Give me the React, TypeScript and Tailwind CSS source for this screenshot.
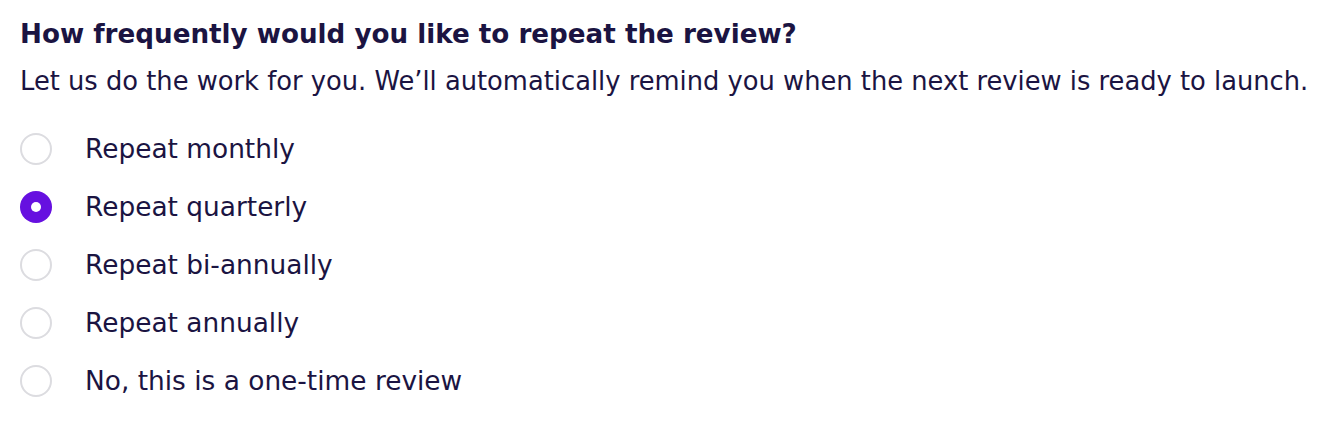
import React, { useState } from 'react'

const options = [
  'Repeat monthly',
  'Repeat quarterly',
  'Repeat bi-annually',
  'Repeat annually',
  'No, this is a one-time review',
]

export default function App() {
  const [selected, setSelected] = useState(1)

  return (
    <div className="min-h-screen bg-white px-5 pt-[16px] text-[#1b1442]" style={{ fontFamily: '"DejaVu Sans", sans-serif' }}>
      <h2 className="text-[26.2px] font-bold leading-[36px]">How frequently would you like to repeat the review?</h2>
      <p className="mt-[12px] text-[25.75px] leading-[34px]">
        Let us do the work for you. We’ll automatically remind you when the next review is ready to launch.
      </p>

      {/* Radio list */}
      <ul className="mt-[22px] flex flex-col">
        {options.map((o, i) => (
          <li key={o}>
            <label className="flex h-[58px] cursor-pointer items-center gap-[33px]" onClick={() => setSelected(i)}>
              {selected === i ? (
                <span className="flex h-8 w-8 items-center justify-center rounded-full bg-[#6610e0]">
                  <span className="h-[10px] w-[10px] rounded-full bg-white" />
                </span>
              ) : (
                <span className="h-8 w-8 rounded-full border-2 border-[#dcdce0] bg-white" />
              )}
              <span className="text-[26.4px]">{o}</span>
            </label>
          </li>
        ))}
      </ul>
    </div>
  )
}
